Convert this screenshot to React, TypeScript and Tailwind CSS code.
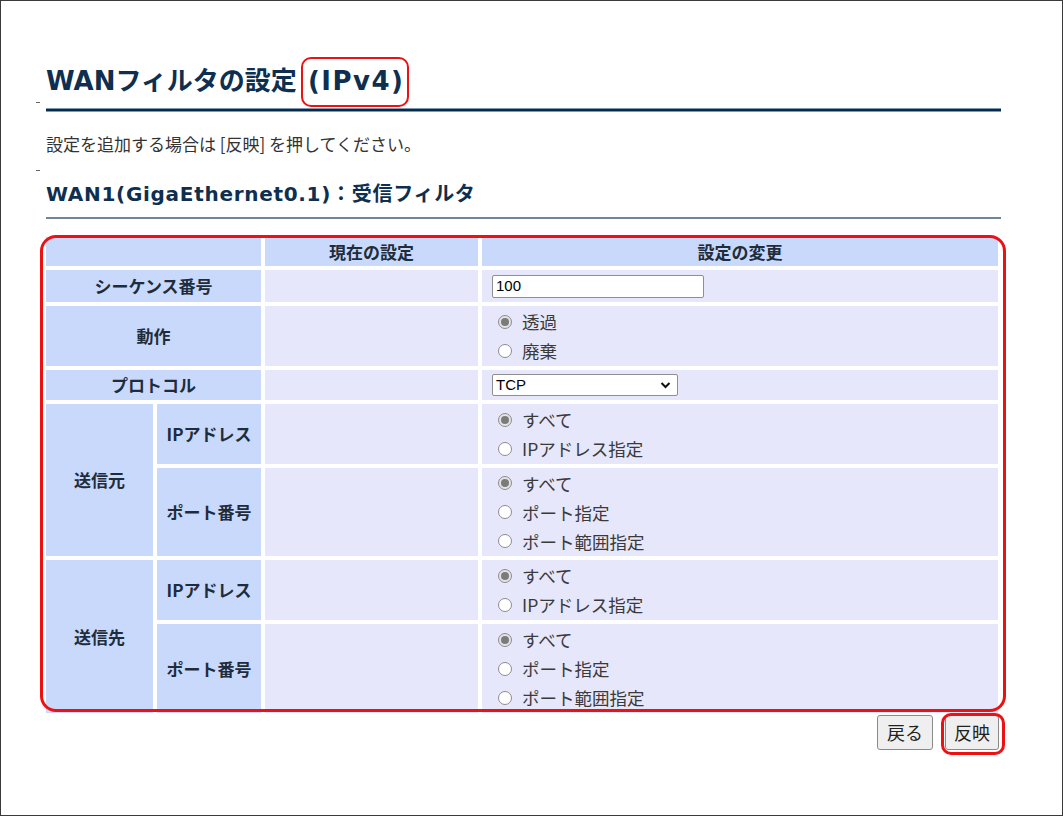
import React from 'react';

type Opt = { label: string; checked?: boolean };

const jp = { fontFamily: '"DejaVu Sans", "Noto Sans CJK JP", sans-serif' };
const body = { fontFamily: '"Noto Sans CJK JP", sans-serif' };

const Radio: React.FC<Opt> = ({ label, checked }) => (
    <div className="flex items-center h-[29px]">
        {checked ? (
            <span className="ml-[6px] w-[14px] h-[14px] rounded-full border border-[#8d8d8d] bg-[#e4e4e4] flex items-center justify-center">
                <span className="w-[8px] h-[8px] rounded-full bg-[#7b7b7b]"></span>
            </span>
        ) : (
            <span className="ml-[6px] w-[14px] h-[14px] rounded-full border border-[#8d8d8d] bg-white"></span>
        )}
        <span className="ml-[10px] text-[17.5px] leading-[29px] text-[#3a3a3a]">{label}</span>
    </div>
);

const Options: React.FC<{ items: Opt[] }> = ({ items }) => (
    <div className="flex flex-col">
        {items.map((o, i) => (
            <Radio key={i} label={o.label} checked={o.checked} />
        ))}
    </div>
);

const label = 'bg-[#c9d9fb] text-center font-bold text-[17px] text-[#1e2c3b] p-0';
const now = 'bg-[#e7e7fb] p-0';
const edit = 'bg-[#e7e7fb] pl-[10px] pr-0 py-0 align-middle';

const ipOpts: Opt[] = [{ label: 'すべて', checked: true }, { label: 'IPアドレス指定' }];
const portOpts: Opt[] = [{ label: 'すべて', checked: true }, { label: 'ポート指定' }, { label: 'ポート範囲指定' }];

export default function App() {
    return (
        <div className="w-[1063px] h-[816px] bg-white border border-[#3a3a3a] overflow-hidden" style={body}>
            <div className="pl-[45px] pt-[62px] w-[1000px]">
                {/* title */}
                <div className="flex items-center h-[36px] text-[26px] font-bold text-[#0e2f4f]" style={jp}>
                    <span>WANフィルタの設定</span>
                    <span className="relative ml-[11px] tracking-[1.5px]">
                        (IPv4)
                        <span className="absolute left-[-7px] right-[-5px] top-[-5px] bottom-[-6px] border-[2.5px] border-[#ee1111] rounded-[10px]"></span>
                    </span>
                </div>
                <div className="mt-[3px] ml-[-10px] w-[4px] h-px bg-[#666]"></div>
                <div className="mt-[5px] h-[4px] bg-[#022b4d] border-y border-[#7f9ab0]"></div>

                <p className="mt-[19px] text-[17px] leading-[26px] text-[#333]">
                    設定を追加する場合は [反映] を押してください。
                </p>
                <div className="mt-[13px] ml-[-10px] w-[4px] h-px bg-[#666]"></div>

                <h2 className="mt-[9px] h-[28px] leading-[28px] text-[20px] tracking-[0.7px] font-bold text-[#0e2f4f]" style={jp}>
                    WAN1(GigaEthernet0.1)：受信フィルタ
                </h2>
                <div className="mt-[9px] h-[2px] bg-[#6e8699]"></div>

                {/* table */}
                <div className="relative mt-[14px] ml-[-4px] w-[960px]">
                    <table className="w-[960px] border-separate border-spacing-[4px] table-fixed">
                        <colgroup>
                            <col className="w-[107px]" />
                            <col className="w-[104px]" />
                            <col className="w-[213px]" />
                            <col />
                        </colgroup>
                        <tbody>
                            <tr className="h-[29px]">
                                <td colSpan={2} className={label}></td>
                                <td className={label}>現在の設定</td>
                                <td className={label}>設定の変更</td>
                            </tr>
                            <tr className="h-[32px]">
                                <td colSpan={2} className={label}>シーケンス番号</td>
                                <td className={now}></td>
                                <td className={edit}>
                                    <div className="w-[212px] h-[23px] bg-white border border-[#8f8f8f] rounded-[2px] pl-[3px] flex items-center text-[15px] text-black" style={{ fontFamily: '"Liberation Sans", sans-serif' }}>
                                        100
                                    </div>
                                </td>
                            </tr>
                            <tr className="h-[60px]">
                                <td colSpan={2} className={label}>動作</td>
                                <td className={now}></td>
                                <td className={edit}>
                                    <Options items={[{ label: '透過', checked: true }, { label: '廃棄' }]} />
                                </td>
                            </tr>
                            <tr className="h-[30px]">
                                <td colSpan={2} className={label}>プロトコル</td>
                                <td className={now}></td>
                                <td className={edit}>
                                    <div className="w-[186px] h-[22px] bg-white border border-[#8f8f8f] rounded-[2px] pl-[3px] pr-[6px] flex items-center justify-between text-[15px] text-black" style={{ fontFamily: '"Liberation Sans", sans-serif' }}>
                                        <span>TCP</span>
                                        <svg width="11" height="8" viewBox="0 0 11 8">
                                            <path d="M1.5 2 L5.5 6 L9.5 2" fill="none" stroke="#111" strokeWidth="2" />
                                        </svg>
                                    </div>
                                </td>
                            </tr>
                            <tr className="h-[60px]">
                                <td rowSpan={2} className={label}>送信元</td>
                                <td className={label}>IPアドレス</td>
                                <td className={now}></td>
                                <td className={edit}>
                                    <Options items={ipOpts} />
                                </td>
                            </tr>
                            <tr className="h-[88px]">
                                <td className={label}>ポート番号</td>
                                <td className={now}></td>
                                <td className={edit}>
                                    <Options items={portOpts} />
                                </td>
                            </tr>
                            <tr className="h-[60px]">
                                <td rowSpan={2} className={label}>送信先</td>
                                <td className={label}>IPアドレス</td>
                                <td className={now}></td>
                                <td className={edit}>
                                    <Options items={ipOpts} />
                                </td>
                            </tr>
                            <tr className="h-[89px]">
                                <td className={label}>ポート番号</td>
                                <td className={now}></td>
                                <td className={edit}>
                                    <Options items={portOpts} />
                                </td>
                            </tr>
                        </tbody>
                    </table>
                    {/* red highlight */}
                    <div className="absolute left-[-2px] right-[-4px] top-[2px] bottom-[5px] border-[3px] border-[#ee1111] rounded-[16px] pointer-events-none"></div>
                </div>

                {/* buttons */}
                <div className="mt-[-2px] flex justify-end gap-[12px] pr-[2px]">
                    <button className="w-[56px] h-[35px] bg-[#efefef] border border-[#8a8a8a] rounded-[3px] text-[18px] text-[#222]">戻る</button>
                    <span className="relative">
                        <button className="w-[54px] h-[35px] bg-[#efefef] border border-[#8a8a8a] rounded-[3px] text-[18px] text-[#222]">反映</button>
                        <span className="absolute left-[-4px] right-[-6px] top-[-2px] bottom-[-5px] border-[3px] border-[#ee1111] rounded-[10px] pointer-events-none"></span>
                    </span>
                </div>
            </div>
        </div>
    );
}
